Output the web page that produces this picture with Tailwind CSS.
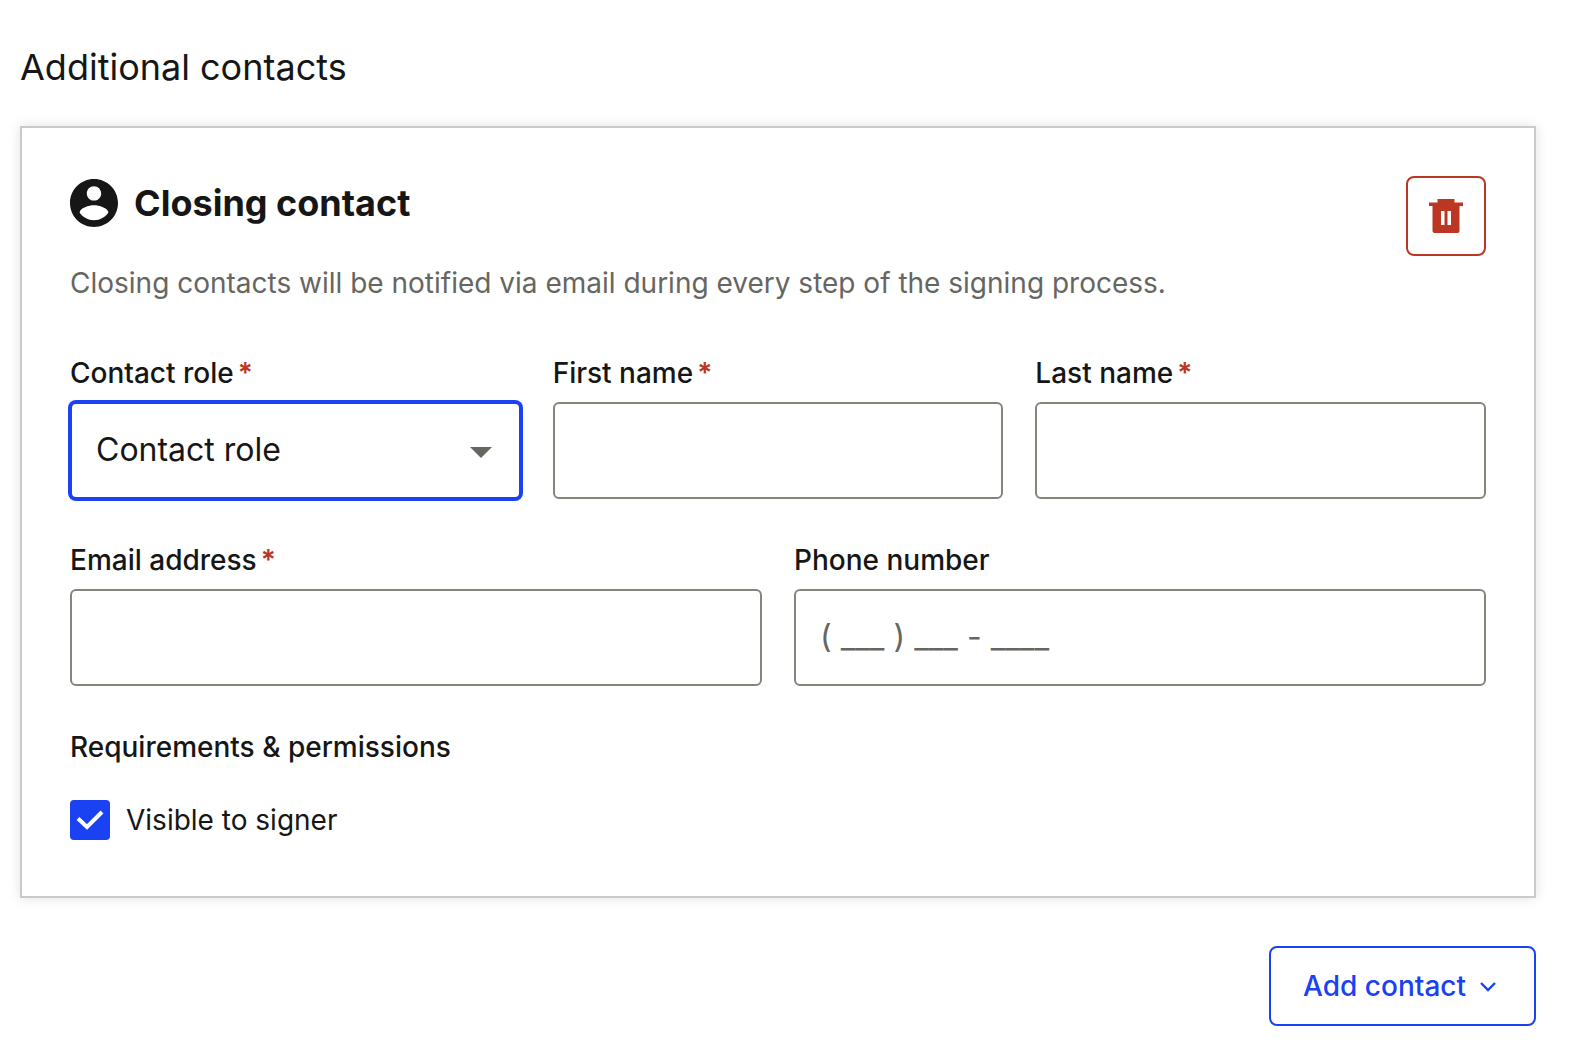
<!DOCTYPE html>
<html lang="en">
<head>
    <meta charset="UTF-8">
    <meta name="viewport" content="width=device-width, initial-scale=1.0">
    <title>Additional contacts</title>
    <script src="https://cdn.jsdelivr.net/npm/@tailwindcss/browser@4"></script>
</head>
<body class="bg-white text-[#161616] font-['Inter',sans-serif] text-[28px] leading-10">

    <main class="pl-5 pr-[38px] pt-[43px] pb-[30px]">
        <h1 class="text-4xl leading-12 mb-[35px]">Additional contacts</h1>

        <!-- Contact Card -->
        <section class="border-2 border-[#cbcbc5] p-12 shadow-[0_0_12px_rgba(0,0,0,0.12)]">
            <header class="flex justify-between items-start mb-[50px]">
                <div>
                    <div class="flex items-center gap-4 h-[54px] mb-[33px]">
                        <svg class="size-12" viewBox="2 2 20 20" fill="currentColor" aria-hidden="true">
                            <path d="M12 2C6.48 2 2 6.48 2 12s4.48 10 10 10 10-4.480 10-10S17.520 2 12 2zm0 3c1.660 0 3 1.340 3 3s-1.340 3-3 3-3-1.340-3-3 1.340-3 3-3zm0 14.200c-2.500 0-4.710-1.280-6-3.220.030-1.990 4-3.080 6-3.080 1.990 0 5.970 1.090 6 3.080-1.290 1.940-3.500 3.220-6 3.220z"/>
                        </svg>
                        <h2 class="text-4xl font-bold">Closing contact</h2>
                    </div>
                    <p class="text-[#666661]">Closing contacts will be notified via email during every step of the signing process.</p>
                </div>
                <button type="button" aria-label="Delete contact" class="flex items-center justify-center shrink-0 size-20 border-2 border-[#bc3624] rounded-lg text-[#bc3624]">
                    <svg class="w-[34px] h-[34px]" viewBox="0 0 34 34" fill="currentColor" aria-hidden="true">
                        <path fill-rule="evenodd" d="M8.500 0h17v3.500H34V7h-3.500v25a2 2 0 0 1-2 2h-23a2 2 0 0 1-2-2V7H0V3.500h8.500zM12 12v14h3.500V12zM18.500 12v14H22V12z"/>
                    </svg>
                </button>
            </header>

            <form>
                <div class="grid grid-cols-3 gap-8 mb-[41px]">
                    <div>
                        <label for="role" class="block font-medium mb-[9px]">Contact role<span class="text-[#bc3624] font-semibold ml-1">*</span></label>
                        <div class="relative">
                            <select id="role" class="block w-full h-[97px] appearance-none border-2 border-[#1a41f2] ring-2 ring-[#1a41f2] rounded-md bg-white px-6 pb-0.5 text-[32px] outline-none">
                                <option>Contact role</option>
                            </select>
                            <svg class="absolute right-[29px] top-[45px] w-[22px] h-[11px] fill-[#666661] pointer-events-none" viewBox="0 0 22 11" aria-hidden="true">
                                <path d="M0 0h22L11 11z"/>
                            </svg>
                        </div>
                    </div>
                    <div>
                        <label for="first-name" class="block font-medium mb-[9px]">First name<span class="text-[#bc3624] font-semibold ml-1">*</span></label>
                        <input type="text" id="first-name" class="block w-full h-[97px] border-2 border-[#85857d] rounded-md px-6 pb-0.5 text-[32px]">
                    </div>
                    <div>
                        <label for="last-name" class="block font-medium mb-[9px]">Last name<span class="text-[#bc3624] font-semibold ml-1">*</span></label>
                        <input type="text" id="last-name" class="block w-full h-[97px] border-2 border-[#85857d] rounded-md px-6 pb-0.5 text-[32px]">
                    </div>
                </div>

                <div class="grid grid-cols-2 gap-8 mb-[41px]">
                    <div>
                        <label for="email" class="block font-medium mb-[9px]">Email address<span class="text-[#bc3624] font-semibold ml-1">*</span></label>
                        <input type="email" id="email" class="block w-full h-[97px] border-2 border-[#85857d] rounded-md px-6 pb-0.5 text-[32px]">
                    </div>
                    <div>
                        <label for="phone" class="block font-medium mb-[9px]">Phone number</label>
                        <input type="tel" id="phone" placeholder="( ___ ) ___ - ____" class="block w-full h-[97px] border-2 border-[#85857d] rounded-md px-6 pb-0.5 text-[32px] placeholder:text-[#666661]">
                    </div>
                </div>

                <!-- Permissions -->
                <fieldset>
                    <legend class="font-medium mb-[25px]">Requirements &amp; permissions</legend>
                    <div class="flex items-center gap-4 h-14">
                        <div class="relative size-10">
                            <input type="checkbox" id="visible" checked class="block size-10 appearance-none rounded-sm border-2 border-[#1a41f2] checked:bg-[#1a41f2]">
                            <svg class="absolute inset-0 size-10 pointer-events-none" viewBox="0 0 40 40" fill="none" stroke="#fff" stroke-width="4" aria-hidden="true">
                                <path d="M8 18.500l9 8.500L32 12"/>
                            </svg>
                        </div>
                        <label for="visible">Visible to signer</label>
                    </div>
                </fieldset>
            </form>
        </section>

        <div class="flex justify-end mt-12">
            <button type="button" class="flex items-center gap-3.5 h-20 pl-8 pr-[38px] border-2 border-[#1a41f2] rounded-lg font-medium text-[#1a41f2]">
                Add contact
                <svg class="w-4 h-3" viewBox="0 0 16 12" fill="none" stroke="currentColor" stroke-width="2.400" aria-hidden="true">
                    <path d="M1 3l7 7 7-7"/>
                </svg>
            </button>
        </div>
    </main>

</body>
</html>
